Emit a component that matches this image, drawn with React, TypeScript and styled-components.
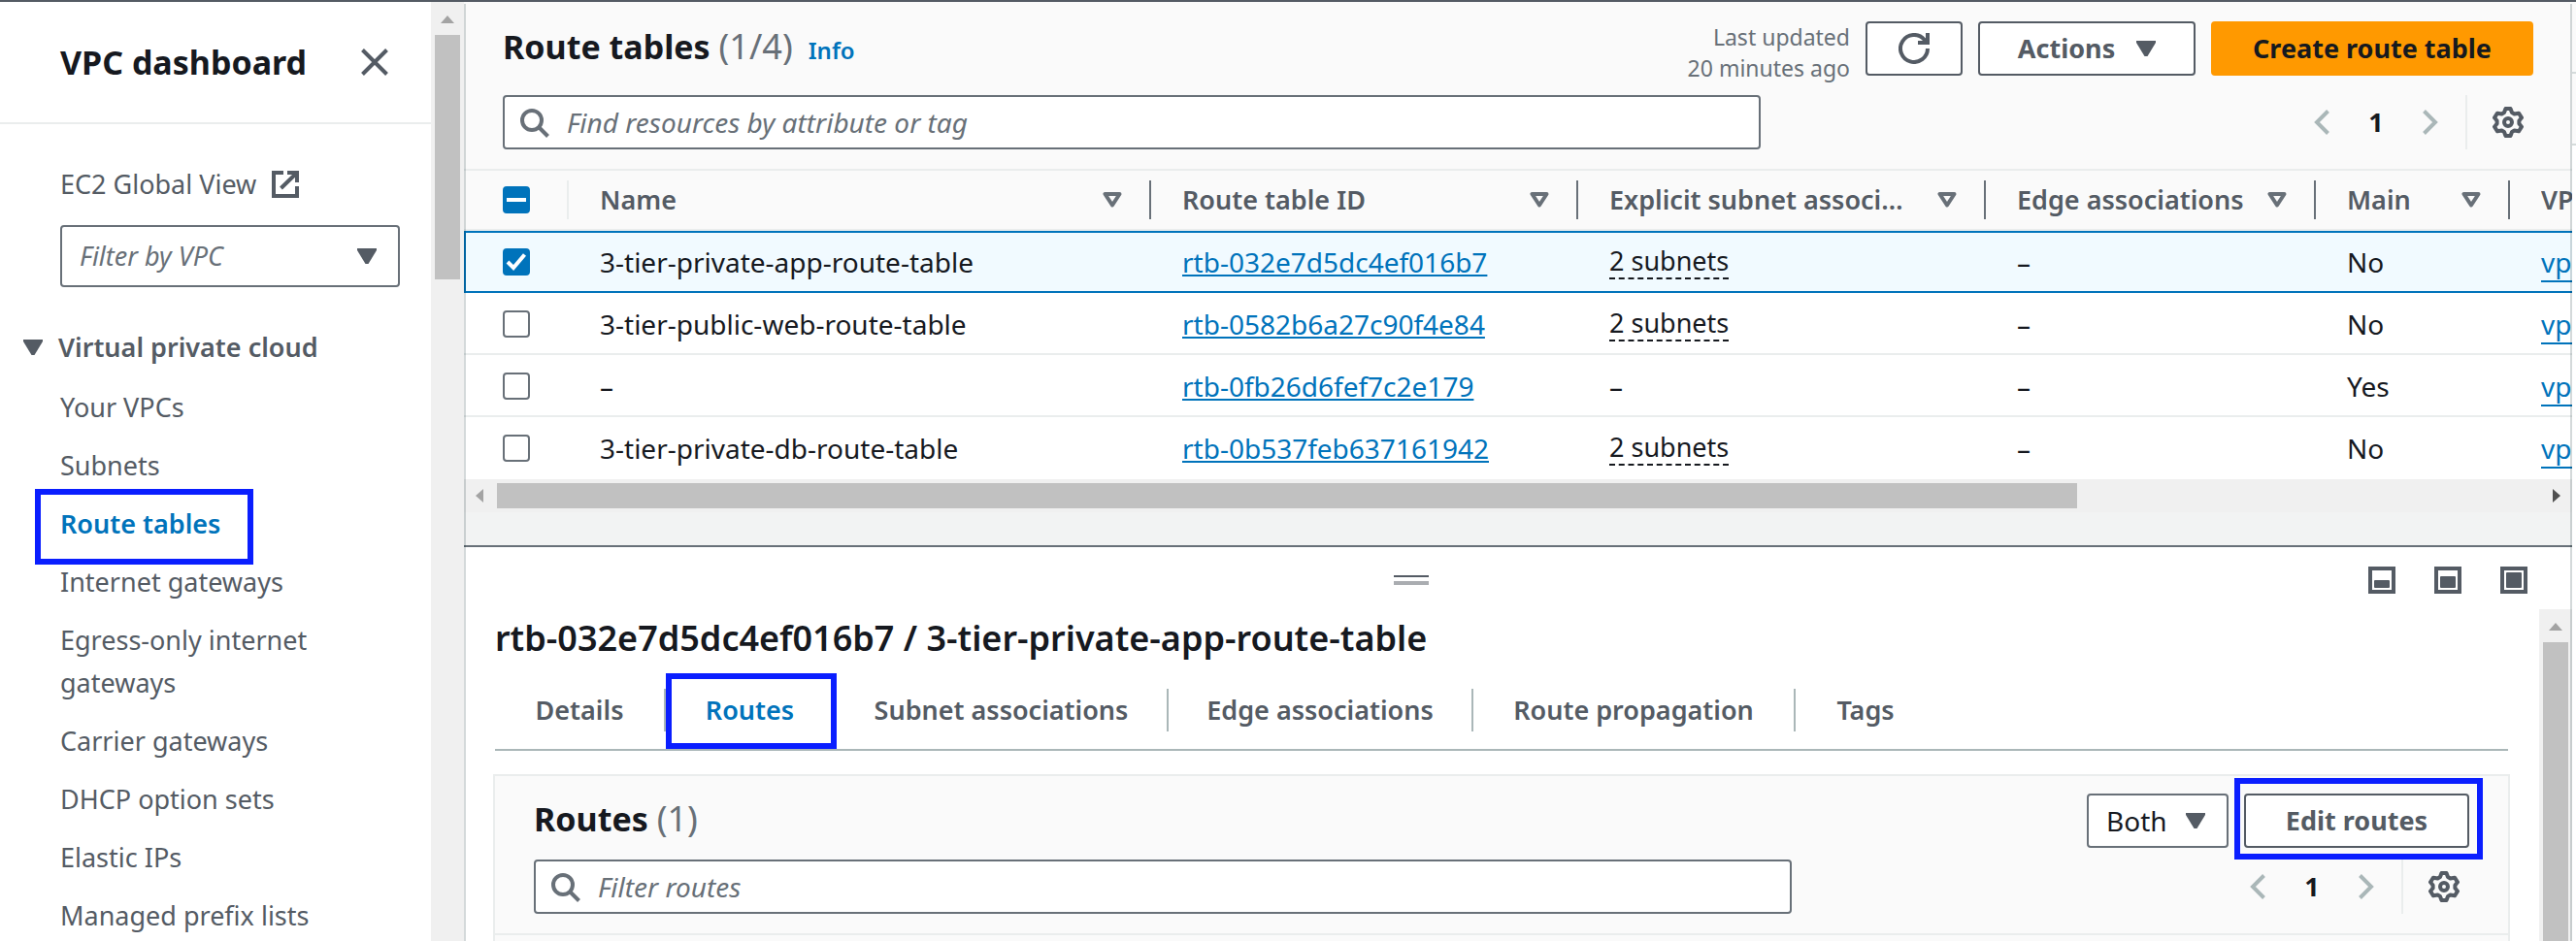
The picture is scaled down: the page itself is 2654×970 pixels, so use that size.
import React from "react";
import styled, { createGlobalStyle } from "styled-components";

const c = {
  ink: "#16191f",
  text: "#545b64",
  muted: "#687078",
  line: "#eaeded",
  tabLine: "#aab7b8",
  link: "#0073bb",
  mark: "#0a1eff",
  track: "#f0f0f0",
  thumb: "#c1c1c1",
};

const GlobalStyle = createGlobalStyle`
  * { box-sizing: border-box; }
  html, body, #root { height: 100%; }
  body {
    margin: 0;
    overflow: hidden;
    background: #fff;
    color: ${c.ink};
    font: 28px/44px "Noto Sans", "Open Sans", sans-serif;
  }
  button, input, select { font: inherit; color: inherit; margin: 0; }
  button { cursor: pointer; }
  svg { display: block; flex: none; }
  h1, h2, ul { margin: 0; padding: 0; }
`;

/* ---------- page frame ---------- */

const Page = styled.div`
  display: flex;
  height: 100vh;
  border-top: 2px solid ${c.text};
`;

const Sidebar = styled.aside`
  flex: none;
  width: 444px;
  overflow: hidden;
`;

const Main = styled.main`
  position: relative;
  flex: 1;
  min-width: 0;
  display: flex;
  flex-direction: column;
  &::before,
  &::after {
    content: "";
    position: absolute;
    z-index: 2;
    top: 2px;
    bottom: 0;
    width: 2px;
    background: rgba(0, 28, 36, 0.17);
  }
  &::before { left: 0; }
  &::after { right: 0; }
`;

const ToolsRail = styled.div`
  flex: none;
  width: 4px;
`;

const RailCell = styled.div`
  height: 74px;
  background: #fafafa;
  border-bottom: 2px solid #d5dbdb;
`;

/* ---------- scrollbars ---------- */

const VTrack = styled.div<{ $w: number }>`
  flex: none;
  width: ${(p) => p.$w}px;
  display: flex;
  flex-direction: column;
  align-items: center;
  gap: 12px;
  padding-top: 14px;
  background: ${c.track};
`;

const VThumb = styled.div<{ $h?: number }>`
  width: 26px;
  ${(p) => (p.$h ? `height: ${p.$h}px;` : "flex: 1;")}
  background: ${c.thumb};
`;

const HTrack = styled.div`
  display: flex;
  align-items: center;
  height: 34px;
  padding: 0 12px;
  gap: 14px;
  background: ${c.track};
`;

const HRange = styled.div`
  flex: 1;
`;

const HThumb = styled.div`
  width: 77.4%;
  height: 26px;
  background: ${c.thumb};
`;

/* ---------- sidebar ---------- */

const SideHead = styled.div`
  display: flex;
  align-items: center;
  justify-content: space-between;
  height: 126px;
  padding: 0 42px 0 62px;
  border-bottom: 2px solid ${c.line};
`;

const SideTitle = styled.h2`
  font-size: 34px;
  line-height: 44px;
  font-weight: 700;
`;

const SideBody = styled.div`
  padding: 40px 32px 0 62px;
  font-size: 27px;
  color: ${c.text};
`;

const SideLink = styled.a<{ $current?: boolean }>`
  position: relative;
  display: inline-flex;
  align-items: center;
  gap: 16px;
  text-decoration: none;
  color: ${(p) => (p.$current ? c.link : c.text)};
  font-weight: ${(p) => (p.$current ? 600 : 400)};
`;

const Mark = styled.span<{ $inset: string }>`
  position: absolute;
  z-index: 1;
  inset: ${(p) => p.$inset};
  border: 6px solid ${c.mark};
  pointer-events: none;
`;

const SectionToggle = styled.button`
  display: flex;
  align-items: center;
  gap: 16px;
  margin: 40px 0 18px -38px;
  padding: 0;
  border: 0;
  background: none;
  font-weight: 650;
`;

const NavList = styled.ul`
  list-style: none;
  display: flex;
  flex-direction: column;
  gap: 16px;
  width: 280px;
  li { display: flex; }
`;

/* ---------- form controls ---------- */

const SelectBox = styled.span<{ $w?: number; $h: number }>`
  position: relative;
  display: block;
  width: ${(p) => (p.$w ? `${p.$w}px` : "auto")};
  height: ${(p) => p.$h}px;
  select {
    width: 100%;
    height: 100%;
    padding: 0 18px;
    appearance: none;
    border: 2px solid ${c.muted};
    border-radius: 4px;
    background: #fff;
  }
  svg {
    position: absolute;
    top: 0;
    bottom: 0;
    right: 24px;
    margin: auto 0;
    pointer-events: none;
  }
`;

const VpcSelect = styled(SelectBox)`
  margin-top: 20px;
  select { font-style: italic; color: ${c.muted}; }
`;

const SearchBox = styled.label`
  position: relative;
  flex: 0 1 1296px;
  height: 56px;
  svg { position: absolute; left: 18px; top: 14px; }
  input {
    width: 100%;
    height: 100%;
    padding: 0 16px 0 64px;
    border: 2px solid ${c.muted};
    border-radius: 4px;
    background: #fff;
  }
  input::placeholder { color: ${c.muted}; opacity: 1; font-style: italic; }
`;

const Button = styled.button<{ $w: number; $primary?: boolean }>`
  position: relative;
  display: flex;
  align-items: center;
  justify-content: center;
  gap: 22px;
  min-width: ${(p) => p.$w}px;
  height: 56px;
  padding: 0;
  border: 2px solid ${(p) => (p.$primary ? "#ff9900" : c.text)};
  border-radius: 4px;
  background: ${(p) => (p.$primary ? "#ff9900" : "#fff")};
  color: ${(p) => (p.$primary ? c.ink : c.text)};
  font-size: 27px;
  font-weight: 700;
`;

const IconButton = styled.button`
  display: flex;
  align-items: center;
  justify-content: center;
  width: 32px;
  height: 32px;
  padding: 0;
  border: 0;
  background: none;
  color: ${c.ink};
`;

const PageNumber = styled(IconButton)`
  font-size: 27px;
  font-weight: 700;
`;

const CheckWrap = styled.span`
  position: relative;
  display: block;
  width: 28px;
  height: 28px;
  input {
    display: block;
    width: 28px;
    height: 28px;
    appearance: none;
    border: 2px solid ${c.muted};
    border-radius: 4px;
    background: #fff;
  }
  input[data-on="true"] { border-color: ${c.link}; background: ${c.link}; }
  svg { position: absolute; inset: 0; pointer-events: none; }
`;

/* ---------- collection header ---------- */

const Head = styled.header<{ $top: number }>`
  display: flex;
  flex-direction: column;
  gap: 12px;
  padding: ${(p) => p.$top}px 40px 20px;
  background: #fafafa;
  border-bottom: 2px solid ${c.line};
`;

const HeadRow = styled.div<{ $center?: boolean }>`
  display: flex;
  align-items: ${(p) => (p.$center ? "center" : "flex-start")};
  justify-content: space-between;
`;

const Title = styled.h1`
  font-size: 34px;
  line-height: 52px;
  font-weight: 700;
`;

const Counter = styled.span`
  font-size: 36px;
  font-weight: 400;
  color: ${c.muted};
`;

const InfoLink = styled.a`
  margin-left: 16px;
  font-size: 24px;
  line-height: 32px;
  font-weight: 600;
  color: ${c.link};
  text-decoration: none;
`;

const Actions = styled.div`
  display: flex;
  gap: 16px;
`;

const Updated = styled.p`
  margin: 0;
  width: 180px;
  font-size: 23px;
  line-height: 32px;
  text-align: right;
  color: ${c.muted};
  white-space: nowrap;
`;

const Pager = styled.div`
  display: flex;
  align-items: center;
  gap: 24px;
  height: 56px;
  padding-right: 10px;
`;

const PagerLine = styled.span`
  width: 2px;
  height: 56px;
  margin: 0 2px 0 -4px;
  background: ${c.line};
`;

/* ---------- table ---------- */

const TableScroll = styled.div`
  overflow: hidden;
`;

const Table = styled.table`
  width: 2740px;
  table-layout: fixed;
  border-collapse: separate;
  border-spacing: 0;
`;

const Th = styled.th<{ $check?: boolean }>`
  position: relative;
  height: 62px;
  padding: 0 30px 2px ${(p) => (p.$check ? 40 : 32)}px;
  text-align: left;
  font-size: 27px;
  line-height: 40px;
  font-weight: 600;
  color: ${c.text};
  background: #fafafa;
  box-shadow: inset 0 -2px ${c.line};
  &::after {
    content: "";
    position: absolute;
    top: 10px;
    right: 0;
    width: 2px;
    height: 40px;
    background: ${(p) => (p.$check ? c.line : c.muted)};
  }
`;

const ThInner = styled.span`
  display: flex;
  align-items: center;
  justify-content: space-between;
  gap: 20px;
  white-space: nowrap;
  span { overflow: hidden; text-overflow: ellipsis; }
`;

const Row = styled.tr<{ $selected?: boolean }>`
  td {
    height: 64px;
    padding: 0 32px;
    line-height: 40px;
    white-space: nowrap;
    background: ${(p) => (p.$selected ? "#f1faff" : "#fff")};
    box-shadow: ${(p) =>
      p.$selected ? `inset 0 2px ${c.link}, inset 0 -2px ${c.link}` : `inset 0 -2px ${c.line}`};
  }
  td:first-child {
    padding: 0 40px;
    ${(p) => p.$selected && `box-shadow: inset 2px 2px ${c.link}, inset 0 -2px ${c.link};`}
  }
  &:last-child td { box-shadow: none; }
`;

const CellLink = styled.a<{ $low?: boolean }>`
  color: ${c.link};
  text-decoration: underline;
  text-decoration-thickness: 2px;
  text-underline-offset: ${(p) => (p.$low ? 8 : 2)}px;
  text-decoration-skip-ink: none;
`;

const Subnets = styled.button`
  display: block;
  padding: 0;
  border: 0;
  background: none;
  border-bottom: 2px dashed ${c.ink};
  font-size: 27px;
  line-height: 34px;
`;

/* ---------- split panel ---------- */

const Gap = styled.div`
  height: 34px;
  background: #f2f3f3;
`;

const Split = styled.section`
  flex: 1;
  min-height: 0;
  display: flex;
  flex-direction: column;
  border-top: 2px solid ${c.muted};
  background: #fff;
`;

const SplitBar = styled.div`
  display: flex;
  align-items: center;
  gap: 34px;
  height: 64px;
  padding: 4px 44px 0 26px;
`;

const Handle = styled.button`
  flex: 1;
  display: flex;
  justify-content: center;
  padding: 0;
  border: 0;
  background: none;
`;

const PanelButtons = styled.div`
  display: flex;
  gap: 36px;
`;

const SplitBody = styled.div`
  flex: 1;
  min-height: 0;
  display: flex;
`;

const SplitContent = styled.div`
  flex: 1;
  min-width: 0;
  overflow: hidden;
  padding: 4px 32px 0 32px;
`;

const SplitTitle = styled.h2`
  font-size: 36px;
  line-height: 52px;
  font-weight: 650;
`;

const Tabs = styled.div`
  display: flex;
  align-items: center;
  height: 90px;
  padding-top: 8px;
  border-bottom: 2px solid ${c.tabLine};
`;

const Tab = styled.button<{ $active?: boolean; $w: number }>`
  position: relative;
  width: ${(p) => p.$w}px;
  height: 44px;
  padding: 0;
  border: 0;
  border-right: 2px solid ${c.tabLine};
  background: none;
  font-size: 27px;
  font-weight: 600;
  white-space: nowrap;
  color: ${(p) => (p.$active ? c.link : c.text)};
  &:last-child { border-right: 0; }
`;

const RoutesCard = styled.div`
  margin: 24px -2px 0;
  height: 300px;
  border: 2px solid ${c.line};
  background: #fafafa;
`;

/* ---------- icons ---------- */

const Caret = () => (
  <svg width="20" height="16" viewBox="0 0 20 16" aria-hidden="true">
    <path d="M0 0h20v2L11.5 16h-3L0 2z" fill={c.text} />
  </svg>
);

const SortIcon = () => (
  <svg width="20" height="16" viewBox="0 0 20 16" aria-hidden="true">
    <path d="M2.5 2h15L10 13.5z" fill="none" stroke={c.muted} strokeWidth="4" strokeLinejoin="round" />
  </svg>
);

const SearchIcon = () => (
  <svg width="30" height="30" viewBox="0 0 30 30" fill="none" stroke={c.muted} strokeWidth="4" aria-hidden="true">
    <circle cx="12" cy="12" r="10" />
    <path d="M19 19l9.500 9.500" />
  </svg>
);

const CloseIcon = () => (
  <svg width="28" height="28" viewBox="0 0 28 28" fill="none" stroke={c.text} strokeWidth="4" aria-hidden="true">
    <path d="M1.500 1.500l25 25M26.500 1.500l-25 25" />
  </svg>
);

const ExternalIcon = () => (
  <svg width="28" height="28" viewBox="0 0 28 28" fill="none" stroke={c.text} strokeWidth="4" aria-hidden="true">
    <path d="M12 2H2v24h24V16M16 2h10v10M25 3L9.500 18" />
  </svg>
);

const RefreshIcon = () => (
  <svg width="32" height="32" viewBox="0 0 32 32" fill="none" stroke={c.text} strokeWidth="4" aria-hidden="true">
    <path d="M30 16a14 14 0 1 1-3.500-9.300L29 10" />
    <path d="M30 0v10H20" />
  </svg>
);

const Chevron = ({ right }: { right?: boolean }) => (
  <svg width="16" height="26" viewBox="0 0 16 26" fill="none" stroke={c.tabLine} strokeWidth="4" aria-hidden="true">
    <path d={right ? "M1.500 1.500L13 13 1.500 24.500" : "M14.500 1.500L3 13l11.500 11.500"} />
  </svg>
);

const GearIcon = () => (
  <svg width="32" height="32" viewBox="0 0 32 32" fill="none" stroke={c.text} strokeWidth="4" strokeLinejoin="round" aria-hidden="true">
    <path d="M13.500 2h5l1.500 4 2.500 1.500 4.500-.8 3 4.600-2.600 3.200v3l2.600 3.200-3 4.600-4.500-.8L20 26l-1.500 4h-5L12 26l-2.500-1.500-4.500.8-3-4.600 2.600-3.200v-3L2 11.300l3-4.600 4.500.8L12 6z" />
    <circle cx="16" cy="16" r="4" />
  </svg>
);

const PanelIcon = ({ top }: { top: number }) => (
  <svg width="28" height="28" viewBox="0 0 28 28" aria-hidden="true">
    <rect x="2" y="2" width="24" height="24" fill="none" stroke={c.text} strokeWidth="4" />
    <rect x="6" y={top} width="16" height={22 - top} rx="1" fill={c.text} />
  </svg>
);

const HandleIcon = () => (
  <svg width="36" height="10" viewBox="0 0 36 10" aria-hidden="true">
    <path d="M0 0h36v2H0z" fill={c.text} />
    <path d="M0 6h36v4H0z" fill="#aaadb1" />
  </svg>
);

const Arrow = ({ dir }: { dir: "up" | "left" | "right" }) => {
  const up = dir === "up";
  return (
    <svg width={up ? 14 : 8} height={up ? 8 : 14} viewBox={up ? "0 0 14 8" : "0 0 8 14"} aria-hidden="true">
      {dir === "up" && <path d="M0 8h14L7 0z" fill="#a3a3a3" />}
      {dir === "left" && <path d="M8 0v14L0 7z" fill="#a3a3a3" />}
      {dir === "right" && <path d="M0 0v14l8-7z" fill="#505050" />}
    </svg>
  );
};

/* ---------- parts ---------- */

const Check = ({ state, label }: { state: "on" | "off" | "mixed"; label: string }) => (
  <CheckWrap>
    <input type="checkbox" aria-label={label} data-on={state !== "off"} defaultChecked={state === "on"} />
    {state !== "off" && (
      <svg width="28" height="28" viewBox="0 0 28 28" fill="none" stroke="#fff" strokeWidth="4">
        <path d={state === "on" ? "M5 14l6 6L22.500 6.500" : "M4 14h20"} />
      </svg>
    )}
  </CheckWrap>
);

const Pagination = () => (
  <Pager>
    <IconButton aria-label="Previous page"><Chevron /></IconButton>
    <PageNumber aria-current="page">1</PageNumber>
    <IconButton aria-label="Next page"><Chevron right /></IconButton>
    <PagerLine />
    <IconButton aria-label="Preferences"><GearIcon /></IconButton>
  </Pager>
);

const navItems = [
  "Your VPCs",
  "Subnets",
  "Route tables",
  "Internet gateways",
  "Egress-only internet gateways",
  "Carrier gateways",
  "DHCP option sets",
  "Elastic IPs",
  "Managed prefix lists",
];

const columns = [
  { name: "Name", width: 600 },
  { name: "Route table ID", width: 440 },
  { name: "Explicit subnet associations", width: 420 },
  { name: "Edge associations", width: 340 },
  { name: "Main", width: 200 },
  { name: "VPC", width: 632 },
];

const rows = [
  { name: "3-tier-private-app-route-table", id: "rtb-032e7d5dc4ef016b7", subnets: "2 subnets", main: "No" },
  { name: "3-tier-public-web-route-table", id: "rtb-0582b6a27c90f4e84", subnets: "2 subnets", main: "No" },
  { name: "–", id: "rtb-0fb26d6fef7c2e179", subnets: "–", main: "Yes" },
  { name: "3-tier-private-db-route-table", id: "rtb-0b537feb637161942", subnets: "2 subnets", main: "No" },
];

const tabs = [
  { name: "Details", width: 176 },
  { name: "Routes", width: 175 },
  { name: "Subnet associations", width: 343 },
  { name: "Edge associations", width: 314 },
  { name: "Route propagation", width: 332 },
  { name: "Tags", width: 144 },
];

export default function App() {
  return (
    <>
      <GlobalStyle />
      <Page>
        <Sidebar>
          <SideHead>
            <SideTitle>VPC dashboard</SideTitle>
            <IconButton aria-label="Close navigation"><CloseIcon /></IconButton>
          </SideHead>
          <SideBody>
            <SideLink href="#global">EC2 Global View <ExternalIcon /></SideLink>
            <VpcSelect $h={64}>
              <select aria-label="Filter by VPC">
                <option>Filter by VPC</option>
              </select>
              <Caret />
            </VpcSelect>
            <SectionToggle aria-expanded="true"><Caret />Virtual private cloud</SectionToggle>
            <nav>
              <NavList>
                {navItems.map((n) => (
                  <li key={n}>
                    <SideLink href="#nav" $current={n === "Route tables"}>
                      {n}
                      {n === "Route tables" && <Mark $inset="-14px -34px -20px -26px" />}
                    </SideLink>
                  </li>
                ))}
              </NavList>
            </nav>
          </SideBody>
        </Sidebar>
        <VTrack $w={34}>
          <Arrow dir="up" />
          <VThumb $h={252} />
        </VTrack>

        <Main>
          <Head $top={20}>
            <HeadRow>
              <Title>
                Route tables <Counter>(1/4)</Counter>
                <InfoLink href="#info">Info</InfoLink>
              </Title>
              <Actions>
                <Updated>Last updated<br />20 minutes ago</Updated>
                <Button $w={100} aria-label="Refresh"><RefreshIcon /></Button>
                <Button $w={224}>Actions <Caret /></Button>
                <Button $w={332} $primary>Create route table</Button>
              </Actions>
            </HeadRow>
            <HeadRow $center>
              <SearchBox>
                <SearchIcon />
                <input type="text" placeholder="Find resources by attribute or tag" />
              </SearchBox>
              <Pagination />
            </HeadRow>
          </Head>

          <TableScroll>
            <Table>
              <colgroup>
                <col width={108} />
                {columns.map((col) => <col key={col.name} width={col.width} />)}
              </colgroup>
              <thead>
                <tr>
                  <Th $check>
                    <Check state="mixed" label="Select all" />
                  </Th>
                  {columns.map((col) => (
                    <Th key={col.name}>
                      <ThInner><span>{col.name}</span><SortIcon /></ThInner>
                    </Th>
                  ))}
                </tr>
              </thead>
              <tbody>
                {rows.map((r, i) => (
                  <Row key={r.id} $selected={i === 0}>
                    <td><Check state={i === 0 ? "on" : "off"} label={`Select ${r.id}`} /></td>
                    <td>{r.name}</td>
                    <td><CellLink href="#rtb">{r.id}</CellLink></td>
                    <td>{r.subnets === "–" ? "–" : <Subnets>{r.subnets}</Subnets>}</td>
                    <td>–</td>
                    <td>{r.main}</td>
                    <td><CellLink href="#vpc" $low>vpc</CellLink></td>
                  </Row>
                ))}
              </tbody>
            </Table>
          </TableScroll>
          <HTrack>
            <Arrow dir="left" />
            <HRange><HThumb /></HRange>
            <Arrow dir="right" />
          </HTrack>
          <Gap />

          <Split>
            <SplitBar>
              <Handle aria-label="Resize panel"><HandleIcon /></Handle>
              <PanelButtons>
                <IconButton aria-label="Small panel"><PanelIcon top={14} /></IconButton>
                <IconButton aria-label="Medium panel"><PanelIcon top={10} /></IconButton>
                <IconButton aria-label="Full panel"><PanelIcon top={6} /></IconButton>
              </PanelButtons>
            </SplitBar>
            <SplitBody>
              <SplitContent>
                <SplitTitle>rtb-032e7d5dc4ef016b7 / 3-tier-private-app-route-table</SplitTitle>
                <Tabs role="tablist">
                  {tabs.map((t) => (
                    <Tab key={t.name} role="tab" $w={t.width} $active={t.name === "Routes"} aria-selected={t.name === "Routes"}>
                      {t.name}
                      {t.name === "Routes" && <Mark $inset="-16px -3px -18px 0" />}
                    </Tab>
                  ))}
                </Tabs>
                <RoutesCard>
                  <Head $top={18}>
                    <HeadRow>
                      <Title>Routes <Counter>(1)</Counter></Title>
                      <Actions>
                        <SelectBox $w={146} $h={56}>
                          <select aria-label="Route type"><option>Both</option></select>
                          <Caret />
                        </SelectBox>
                        <Button $w={232}>
                          Edit routes
                          <Mark $inset="-18px -16px -14px -12px" />
                        </Button>
                      </Actions>
                    </HeadRow>
                    <HeadRow $center>
                      <SearchBox>
                        <SearchIcon />
                        <input type="text" placeholder="Filter routes" />
                      </SearchBox>
                      <Pagination />
                    </HeadRow>
                  </Head>
                </RoutesCard>
              </SplitContent>
              <VTrack $w={34}>
                <Arrow dir="up" />
                <VThumb />
              </VTrack>
            </SplitBody>
          </Split>
        </Main>

        <ToolsRail>
          <RailCell />
          <RailCell />
        </ToolsRail>
      </Page>
    </>
  );
}
